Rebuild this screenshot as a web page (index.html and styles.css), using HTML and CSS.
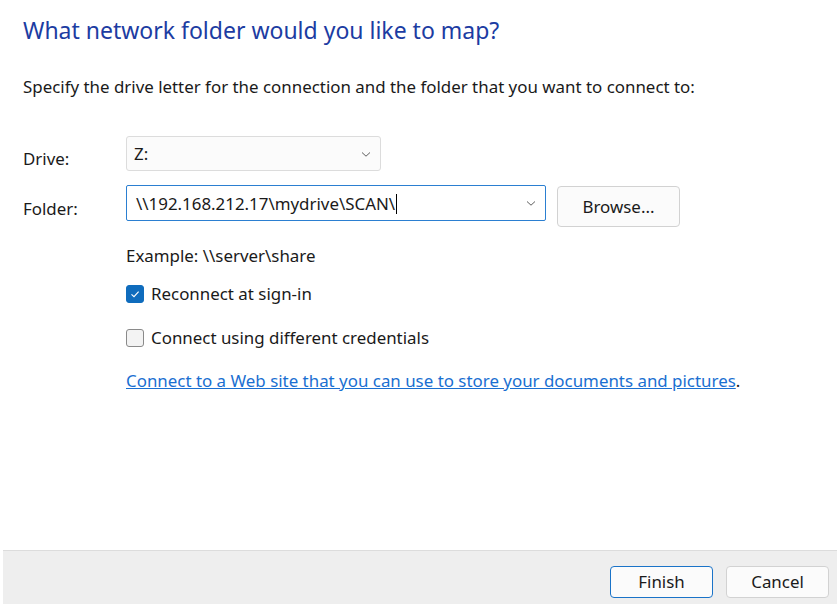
FILE: index.html
```html
<!DOCTYPE html>
<html>
  <head>
    <link rel="stylesheet" href="styles.css">
  </head>
  <body>
    <div class="wizard">
      <div class="content">
        <h1 class="title">What network folder would you like to map?</h1>
        <p class="intro">Specify the drive letter for the connection and the folder that you want to connect to:</p>

        <div class="form">
          <label class="field-label" for="drive">Drive:</label>
          <div class="field">
            <div class="select drive-select" id="drive">
              <span>Z:</span>
              <svg class="chevron" width="12" height="12" viewBox="0 0 12 12"><path d="M2 4.5 L6 8.2 L10 4.5" fill="none" stroke="#5f5f5f" stroke-width="1"/></svg>
            </div>
          </div>

          <label class="field-label folder-label" for="folder">Folder:</label>
          <div class="field folder-row">
            <div class="select folder-select" id="folder">
              <span>\\192.168.212.17\mydrive\SCAN\<i class="caret"></i></span>
              <svg class="chevron" width="12" height="12" viewBox="0 0 12 12"><path d="M2 4.5 L6 8.2 L10 4.5" fill="none" stroke="#5f5f5f" stroke-width="1"/></svg>
            </div>
            <button class="btn browse">Browse...</button>
          </div>
        </div>

        <div class="options">
          <p class="example">Example: \\server\share</p>

          <label class="check">
            <span class="box checked">
              <svg width="12" height="12" viewBox="0 0 12 12"><path d="M2.5 6.3 L5 8.6 L9.6 3.6" fill="none" stroke="#fff" stroke-width="1.1"/></svg>
            </span>
            Reconnect at sign-in
          </label>

          <label class="check">
            <span class="box"></span>
            Connect using different credentials
          </label>

          <p class="web"><a href="#">Connect to a Web site that you can use to store your documents and pictures</a>.</p>
        </div>
      </div>

      <div class="footer">
        <button class="btn primary">Finish</button>
        <button class="btn">Cancel</button>
      </div>
    </div>
  </body>
</html>
```

FILE: styles.css
```css
/* wizard page */
body {
  margin: 0;
  background-color: #ffffff;
  font-family: "Noto Sans", "Open Sans", sans-serif;
  color: #1a1a1a;
}

.wizard {
  width: 840px;
  height: 607px;
  display: flex;
  flex-direction: column;
}

.content {
  flex: 1;
  padding: 0 23px;
}

.title {
  margin: 15px 0 0;
  font-size: 23px;
  font-weight: normal;
  line-height: 30px;
  color: #1c3ca2;
}

.intro {
  margin: 32px 0 0;
  font-size: 16.9px;
  line-height: 20px;
}

.form {
  display: grid;
  grid-template-columns: 103px auto;
  row-gap: 14px;
  margin-top: 39px;
  align-items: center;
  font-size: 16.9px;
}

.field-label {
  line-height: 20px;
  padding-top: 11px;
}

.folder-label {
  align-self: start;
  padding-top: 14px;
}

.folder-row {
  display: flex;
  align-items: flex-start;
  gap: 11px;
}

.select {
  box-sizing: border-box;
  display: flex;
  align-items: center;
  justify-content: space-between;
  padding: 0 8px 0 7px;
  background-color: #fbfbfb;
  border: 1px solid #dcdcdc;
  border-radius: 3px;
}

.drive-select {
  width: 255px;
  height: 35px;
}

.folder-select {
  width: 420px;
  height: 36px;
  padding-left: 9px;
  background-color: #ffffff;
  border-color: #2b7fd1;
  border-radius: 2px;
}

.caret {
  display: inline-block;
  width: 1px;
  height: 20px;
  margin-left: 1px;
  vertical-align: -4px;
  background-color: #000;
}

.btn {
  box-sizing: border-box;
  font-family: inherit;
  font-size: 16.9px;
  color: #1a1a1a;
  background-color: #fbfbfb;
  border: 1px solid #d2d2d2;
  border-radius: 4px;
}

.browse {
  width: 123px;
  height: 41px;
  margin-top: 1px;
}

.options {
  padding-left: 103px;
  font-size: 16.9px;
}

.example {
  margin: 19px 0 0;
  line-height: 20px;
}

.check {
  display: flex;
  align-items: center;
  gap: 7px;
  margin-top: 18px;
  line-height: 20px;
}

.check + .check {
  margin-top: 24px;
}

.box {
  box-sizing: border-box;
  width: 18px;
  height: 18px;
  display: flex;
  align-items: center;
  justify-content: center;
  border: 1px solid #8a8a8a;
  border-radius: 3px;
  background-color: #f3f3f3;
}

.box.checked {
  border-color: #0f6cbd;
  background-color: #0f6cbd;
}

.web {
  margin: 23px 0 0;
  line-height: 20px;
}

.web a {
  color: #1a6fd1;
}

.footer {
  height: 53px;
  margin: 0 3px 3px;
  display: flex;
  justify-content: flex-end;
  align-items: center;
  gap: 13px;
  padding-right: 8px;
  background-color: #eeeeee;
  border-top: 1px solid #dcdcdc;
}

.footer .btn {
  width: 103px;
  height: 32px;
  margin-top: 8px;
}

.footer .primary {
  border-color: #1a73c8;
}
```
